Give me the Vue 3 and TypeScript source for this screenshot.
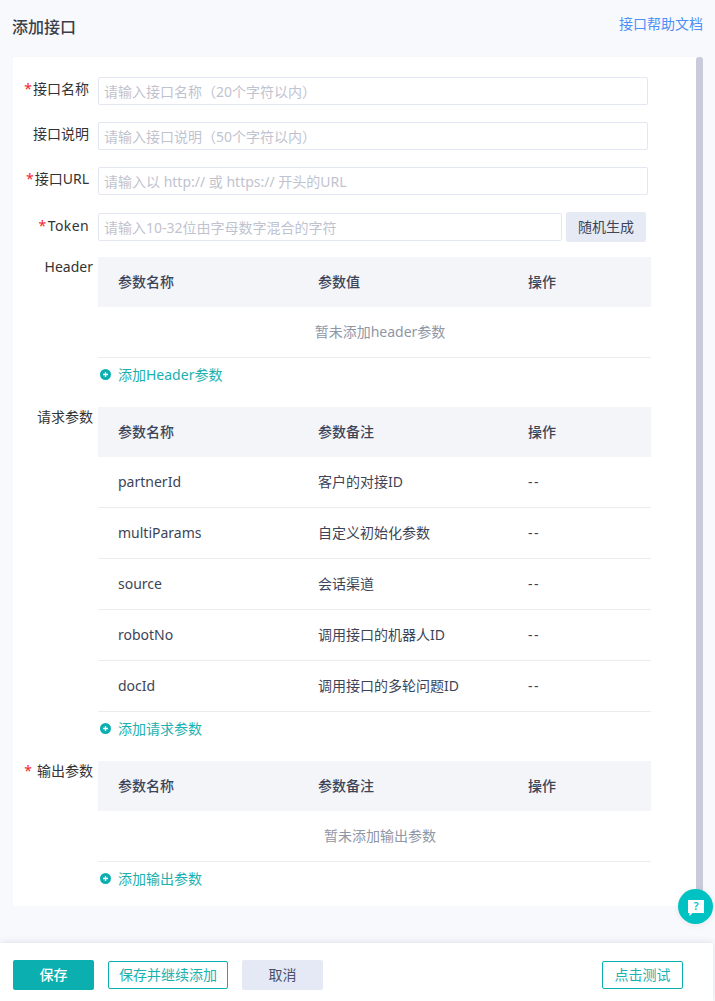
<script setup lang="ts">
interface Row { name: string; note: string }
interface Section {
  label: string
  required: boolean
  col2: string
  empty?: string
  add: string
  rows: Row[]
}
const sections: Section[] = [
  { label: 'Header', required: false, col2: '参数值', empty: '暂未添加header参数', add: '添加Header参数', rows: [] },
  {
    label: '请求参数', required: false, col2: '参数备注', add: '添加请求参数',
    rows: [
      { name: 'partnerId', note: '客户的对接ID' },
      { name: 'multiParams', note: '自定义初始化参数' },
      { name: 'source', note: '会话渠道' },
      { name: 'robotNo', note: '调用接口的机器人ID' },
      { name: 'docId', note: '调用接口的多轮问题ID' },
    ],
  },
  { label: '输出参数', required: true, col2: '参数备注', empty: '暂未添加输出参数', add: '添加输出参数', rows: [] },
]
const fields = [
  { label: '接口名称', required: true, ph: '请输入接口名称（20个字符以内）' },
  { label: '接口说明', required: false, ph: '请输入接口说明（50个字符以内）' },
  { label: '接口URL', required: true, ph: '请输入以 http:// 或 https:// 开头的URL' },
]
</script>

<template>
  <div class="page">
    <header class="top">
      <h1>添加接口</h1>
      <a class="help">接口帮助文档</a>
    </header>
    <main class="card">
      <div v-for="f in fields" :key="f.label" class="field">
        <label class="lab"><i v-if="f.required">*</i>{{ f.label }}</label>
        <input class="inp" :placeholder="f.ph" />
      </div>
      <div class="field token">
        <label class="lab tk"><i>*</i>Token</label>
        <input class="inp short" placeholder="请输入10-32位由字母数字混合的字符" />
        <button class="gen">随机生成</button>
      </div>
      <section v-for="s in sections" :key="s.label" class="sec">
        <div class="sec-lab"><i v-if="s.required" class="gap">*</i>{{ s.label }}</div>
        <div class="sec-body">
          <div class="thead">
            <span>参数名称</span><span>{{ s.col2 }}</span><span>操作</span>
          </div>
          <div v-if="s.empty" class="empty">{{ s.empty }}</div>
          <div v-for="r in s.rows" :key="r.name" class="trow">
            <span>{{ r.name }}</span><span>{{ r.note }}</span><span class="dash">--</span>
          </div>
          <a class="add">
            <svg width="11" height="11" viewBox="0 0 11 11">
              <circle cx="5.5" cy="5.5" r="5.5" fill="#0cafaf" />
              <path d="M5.5 3v5M3 5.5h5" stroke="#fff" stroke-width="1.3" />
            </svg>
            {{ s.add }}
          </a>
        </div>
      </section>
      <div class="thumb"></div>
    </main>
    <footer class="foot">
      <button class="btn primary">保存</button>
      <button class="btn outline wide">保存并继续添加</button>
      <button class="btn ghost">取消</button>
      <button class="btn outline test">点击测试</button>
    </footer>
    <div class="fab">
      <svg width="16" height="17" viewBox="0 0 16 17">
        <path d="M0 0h16v13H4.500L1.500 16v-3H0z" fill="#fff" />
      </svg>
      <span class="q">?</span>
    </div>
  </div>
</template>

<style>
html, body { margin: 0; background: #f8f9fd; }
</style>

<style scoped>
.page {
  position: relative;
  width: 715px;
  height: 1001px;
  overflow: hidden;
  background: #f8f9fd;
  font-family: "Noto Sans", "Noto Sans CJK SC", sans-serif;
  font-size: 14px;
  line-height: 20px;
  color: #3d4457;
}
.top {
  height: 57px;
  box-sizing: border-box;
  padding: 15px 12px 0 12px;
  display: flex;
  justify-content: space-between;
  align-items: flex-start;
}
h1 {
  margin: -1px 0 0;
  font-size: 16px;
  line-height: 26px;
  font-weight: 500;
  color: #3c3f47;
}
.help {
  font-size: 14px;
  line-height: 20px;
  color: #4d8ff7;
  margin-top: -1px;
}
.card {
  position: relative;
  width: 683px;
  height: 849px;
  margin-left: 13px;
  background: #fff;
  box-sizing: border-box;
  padding-top: 20px;
}
.field {
  display: flex;
  align-items: center;
  height: 28px;
  margin-bottom: 17px;
}
.field.token { margin-top: 18px; margin-bottom: 16px; }
.lab {
  width: 76px;
  flex: none;
  text-align: right;
  color: #333;
  line-height: 20px;
  margin-top: -4px;
  white-space: nowrap;
}
.lab.tk { margin-top: -2px; letter-spacing: 0.4px; }
.lab.tk i { margin-right: 1px; }
i { font-style: normal; color: #f5222d; margin-right: 1px; }
i.gap { margin-right: 5px; }
.inp {
  width: 550px;
  height: 28px;
  margin-left: 9px;
  box-sizing: border-box;
  border: 1px solid #e3e6f3;
  border-radius: 2px;
  padding: 0 5px;
  font: inherit;
  outline: none;
  background: #fff;
}
.inp::placeholder { color: #bfc3cf; opacity: 1; }
.inp.short { width: 464px; }
.gen {
  width: 80px;
  height: 30px;
  margin-left: 4px;
  border: 0;
  border-radius: 2px;
  background: #e5eaf5;
  color: #3d4457;
  font: inherit;
  padding: 0;
}
.sec { display: flex; }
.sec-lab {
  width: 80px;
  flex: none;
  text-align: right;
  line-height: 20px;
  color: #333;
  white-space: nowrap;
}
.sec-body { width: 553px; margin-left: 5px; }
.thead, .trow {
  display: grid;
  grid-template-columns: 200px 210px 1fr;
  padding-left: 20px;
  align-items: center;
}
.thead {
  height: 50px;
  background: #f4f5f9;
  font-weight: 500;
  color: #3d4457;
}
.trow {
  height: 50px;
  border-bottom: 1px solid #ebedf0;
  color: #3d4457;
}
.dash { letter-spacing: 1.5px; }
.empty {
  height: 50px;
  line-height: 50px;
  box-sizing: content-box;
  padding-left: 11px;
  text-align: center;
  border-bottom: 1px solid #ebedf0;
  color: #8f96a6;
}
.add {
  display: flex;
  align-items: center;
  gap: 7px;
  height: 33px;
  margin-left: 2px;
  padding-bottom: 16px;
  color: #1ab1b1;
}
.thumb {
  position: absolute;
  left: 683px;
  top: 0;
  width: 7px;
  height: 835px;
  background: #c9cbdb;
  border-radius: 3px;
}
.foot {
  position: absolute;
  left: 0;
  top: 943px;
  width: 713px;
  height: 58px;
  box-sizing: border-box;
  background: #fff;
  box-shadow: 0 -1px 6px rgba(60, 65, 90, 0.12);
  display: flex;
  align-items: center;
  gap: 14px;
  padding: 6px 0 0 13px;
}
.btn {
  width: 81px;
  height: 28px;
  padding: 0;
  border-radius: 2px;
  font: inherit;
  box-sizing: border-box;
}
.primary { height: 30px; background: #0cafaf; border: 0; color: #fff; font-weight: 500; }
.outline { background: #fff; border: 1px solid #0cafaf; color: #1ab1b1; }
.wide { width: 120px; }
.ghost { height: 30px; background: #e5e9f5; border: 0; color: #4a5068; }
.test { margin-left: 265px; }
.fab {
  position: absolute;
  left: 678px;
  top: 889px;
  width: 35px;
  height: 35px;
  border-radius: 50%;
  background: #00c2c2;
  box-shadow: 0 1px 6px rgba(0, 0, 0, 0.08);
}
.fab svg { position: absolute; left: 10px; top: 11px; }
.q {
  position: absolute;
  left: 10px;
  top: 9px;
  width: 16px;
  text-align: center;
  font-size: 11px;
  line-height: 16px;
  font-weight: 600;
  color: #00c2c2;
}
</style>
